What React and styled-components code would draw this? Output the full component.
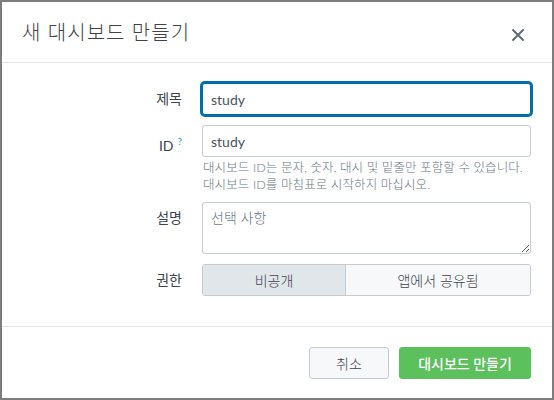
import React from "react";
import styled, { createGlobalStyle } from "styled-components";

const GlobalStyle = createGlobalStyle`
  html, body {
    margin: 0;
    padding: 0;
    background: #ffffff;
  }
  * {
    box-sizing: border-box;
  }
`;

const FONT = `Lato, "Noto Sans CJK KR", sans-serif`;

const Modal = styled.div`
  width: 554px;
  height: 400px;
  border: 2px solid #7d7d7d;
  background: #ffffff;
  display: flex;
  flex-direction: column;
  font-family: ${FONT};
  font-weight: 300;
  color: #3c444d;
`;

const Header = styled.div`
  height: 61px;
  display: flex;
  align-items: center;
  justify-content: space-between;
  padding: 0 22px 0 20px;
  border-bottom: 1px solid #e1e6eb;
`;

const Title = styled.h1`
  margin: 0;
  font-size: 20px;
  font-weight: 300;
  color: #3c444d;
  letter-spacing: 1px;
  padding-bottom: 2px;
`;

const CloseButton = styled.button`
  width: 24px;
  height: 24px;
  border: none;
  background: none;
  padding: 0;
  display: flex;
  align-items: center;
  justify-content: center;
  color: #5c6773;
  margin-top: 6px;
  cursor: pointer;
`;

const Body = styled.div`
  flex: 1;
  display: grid;
  grid-template-columns: 180px 1fr;
  column-gap: 20px;
  row-gap: 10px;
  align-content: start;
  padding: 20px 21px 0 0;
  border-bottom: 1px solid #e1e6eb;
`;

const Label = styled.label`
  text-align: right;
  font-size: 14px;
  line-height: 32px;
  font-weight: 400;
  color: #3c444d;
`;

const Help = styled.sup`
  color: #1a9cd5;
  font-size: 10px;
  margin-left: 4px;
  vertical-align: 6px;
`;

const Field = styled.div`
  display: flex;
  flex-direction: column;
`;

const Input = styled.input`
  height: 32px;
  width: 100%;
  border: 1px solid ${(p) => (p.$focused ? "#006eaa" : "#c3cbd4")};
  box-shadow: ${(p) => (p.$focused ? "0 0 0 2px #006eaa" : "none")};
  border-radius: 3px;
  padding: 0 8px;
  font-family: ${FONT};
  font-size: 14px;
  font-weight: 400;
  color: #4a525b;
  outline: none;
  background: #ffffff;
`;

const HelpText = styled.div`
  font-size: 12.5px;
  line-height: 17px;
  color: #6b7785;
  padding: 2px 0 0 1px;
  margin-bottom: -1px;
  letter-spacing: 0.1px;
`;

const TextArea = styled.textarea`
  height: 52px;
  width: 100%;
  border: 1px solid #c3cbd4;
  border-radius: 3px;
  padding: 4px 8px;
  font-family: ${FONT};
  font-size: 14px;
  font-weight: 300;
  color: #3c444d;
  outline: none;
  resize: vertical;
  &::placeholder {
    color: #6b7785;
  }
`;

const Segmented = styled.div`
  display: grid;
  grid-template-columns: 142px 1fr;
  height: 32px;
  border: 1px solid #c3cbd4;
  border-radius: 3px;
  overflow: hidden;
`;

const Segment = styled.button`
  border: none;
  border-left: ${(p) => (p.$first ? "none" : "1px solid #c3cbd4")};
  background: ${(p) => (p.$active ? "#e1e6eb" : "#f7f8fa")};
  font-family: ${FONT};
  font-size: 14px;
  font-weight: 300;
  color: #3c444d;
  padding: 0;
  cursor: pointer;
`;

const Footer = styled.div`
  height: 71px;
  display: flex;
  justify-content: flex-end;
  align-items: center;
  gap: 10px;
  padding: 0 21px 0 0;
`;

const Button = styled.button`
  height: 32px;
  width: ${(p) => p.$width}px;
  border-radius: 3px;
  border: 1px solid ${(p) => (p.$primary ? "#5cc05c" : "#c3cbd4")};
  background: ${(p) => (p.$primary ? "#5cc05c" : "#f7f8fa")};
  color: ${(p) => (p.$primary ? "#ffffff" : "#3c444d")};
  font-family: ${FONT};
  font-size: 14px;
  font-weight: ${(p) => (p.$primary ? 500 : 300)};
  padding: 0;
  cursor: pointer;
  margin-top: 1px;
`;

const CloseIcon = () => (
  <svg width="12" height="12" viewBox="0 0 12 12">
    <path d="M1 1 L11 11 M11 1 L1 11" stroke="currentColor" strokeWidth="1.8" strokeLinecap="round" />
  </svg>
);

export default function App() {
  return (
    <>
      <GlobalStyle />
      <Modal>
        <Header>
          <Title>새 대시보드 만들기</Title>
          <CloseButton aria-label="닫기">
            <CloseIcon />
          </CloseButton>
        </Header>
        <Body>
          <Label>제목</Label>
          <Input $focused defaultValue="study" />

          <Label>
            ID<Help>?</Help>
          </Label>
          <Field>
            <Input defaultValue="study" />
            <HelpText>
              대시보드 ID는 문자, 숫자, 대시 및 밑줄만 포함할 수 있습니다.
              <br />
              대시보드 ID를 마침표로 시작하지 마십시오.
            </HelpText>
          </Field>

          <Label>설명</Label>
          <TextArea placeholder="선택 사항" />

          <Label>권한</Label>
          <Segmented>
            <Segment $first $active>
              비공개
            </Segment>
            <Segment>앱에서 공유됨</Segment>
          </Segmented>
        </Body>
        <Footer>
          <Button $width={80}>취소</Button>
          <Button $primary $width={132}>
            대시보드 만들기
          </Button>
        </Footer>
      </Modal>
    </>
  );
}
